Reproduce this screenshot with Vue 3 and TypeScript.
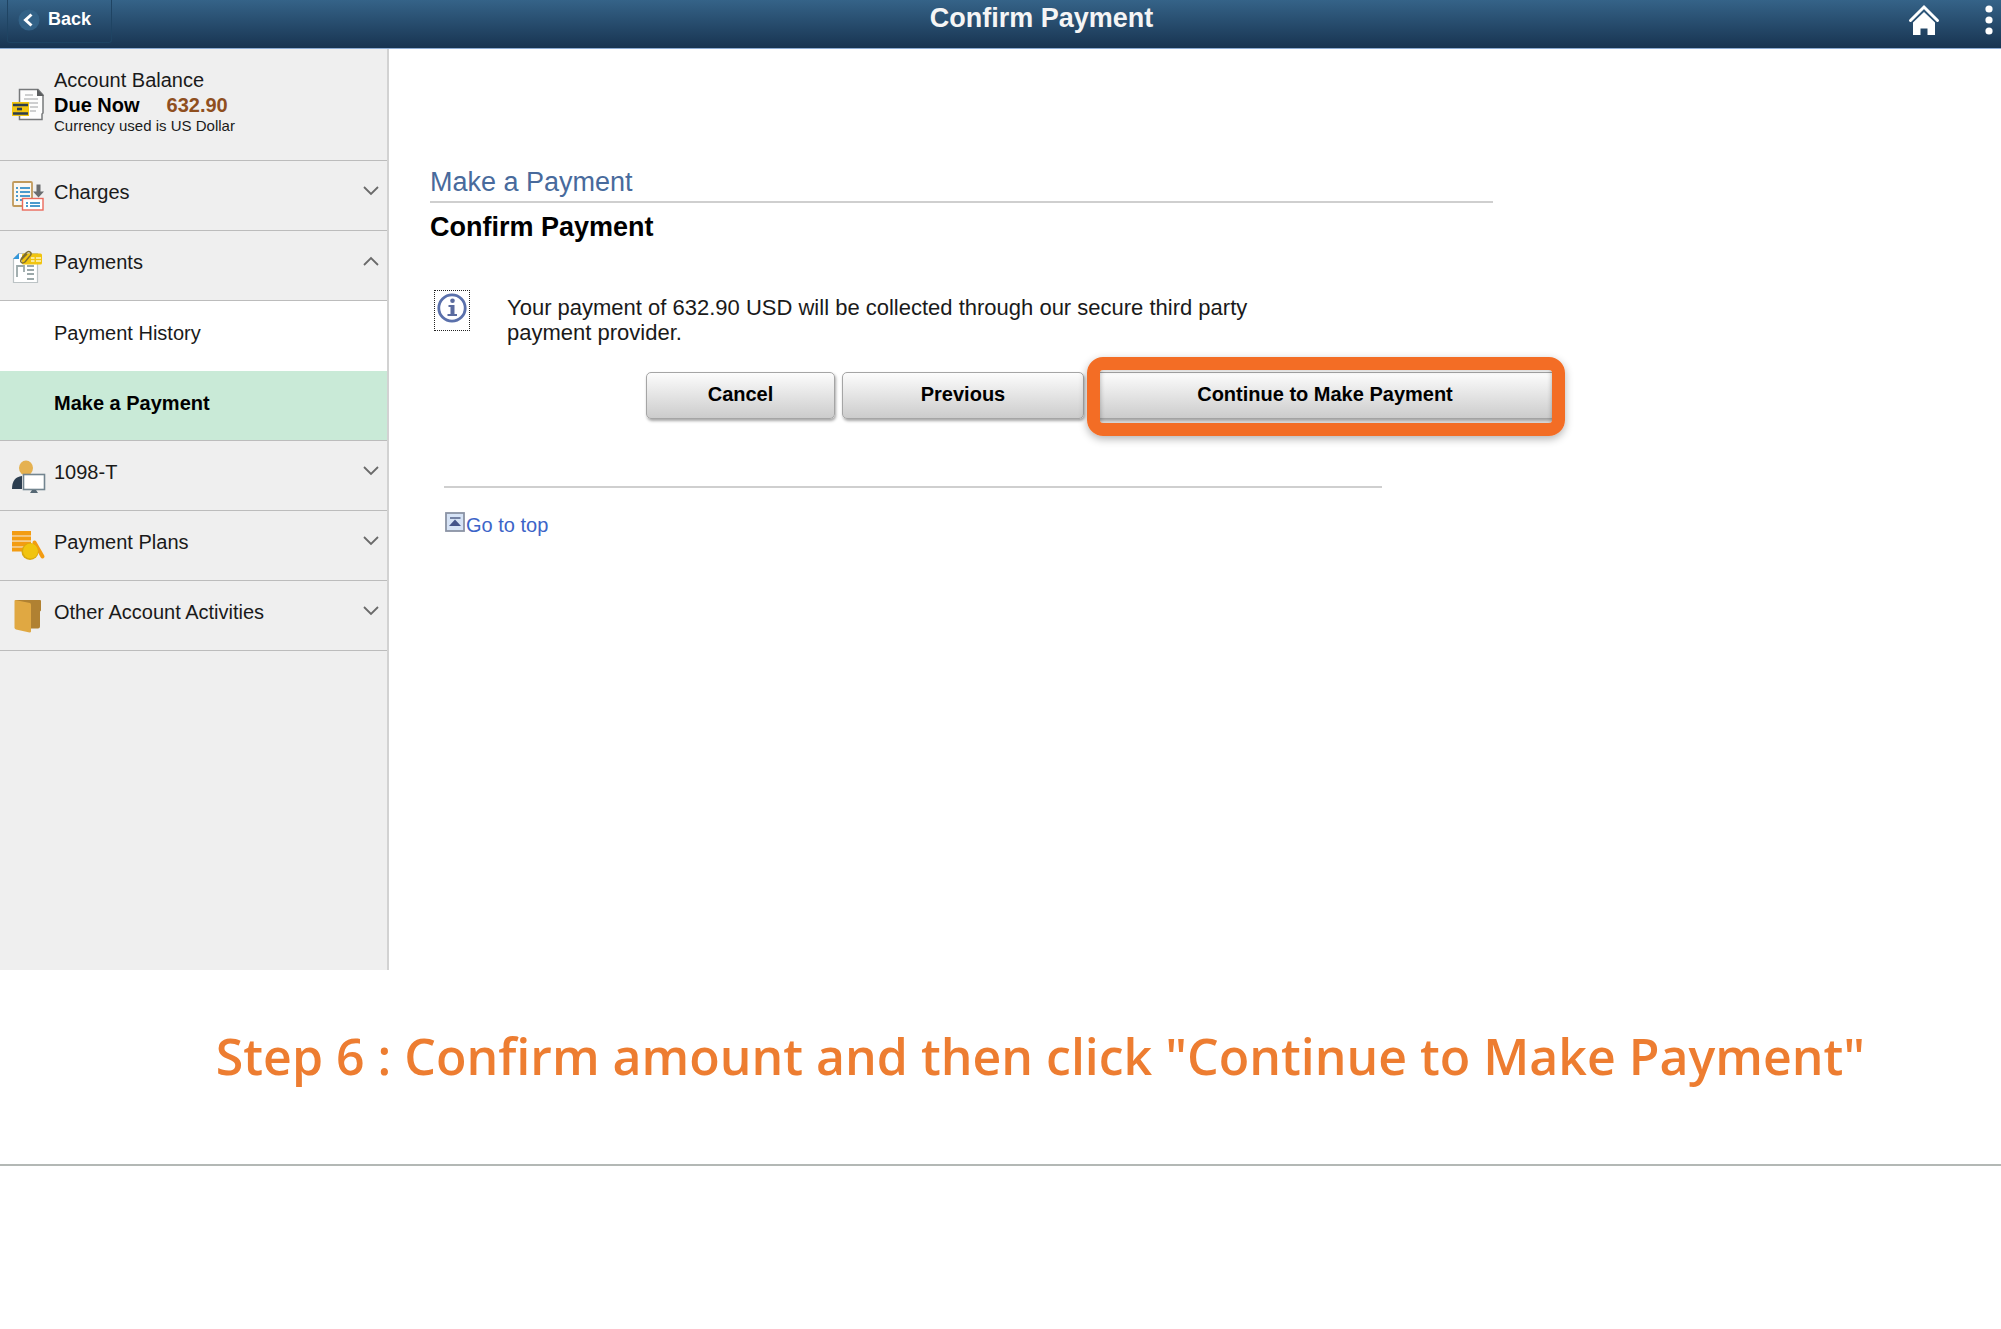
<script setup lang="ts">
import { ref } from 'vue'

interface SubItem {
  label: string
  current: boolean
}
interface Section {
  id: string
  label: string
  items: SubItem[]
}

const sections: Section[] = [
  { id: 'charges', label: 'Charges', items: [] },
  {
    id: 'payments',
    label: 'Payments',
    items: [
      { label: 'Payment History', current: false },
      { label: 'Make a Payment', current: true },
    ],
  },
  { id: 'tax', label: '1098-T', items: [] },
  { id: 'plans', label: 'Payment Plans', items: [] },
  { id: 'other', label: 'Other Account Activities', items: [] },
]
const open = ref<string>('payments')
function toggle(id: string): void {
  open.value = open.value === id ? '' : id
}
</script>

<template>
  <div id="top" class="page">
    <div class="shell">
      <header class="bar">
        <button class="back" type="button">
          <svg width="22" height="22" viewBox="0 0 22 22" aria-hidden="true">
            <circle cx="11" cy="11" r="10.5" fill="#336287" />
            <path d="M13.5 5.5 7.5 11l6 5.500" fill="none" stroke="#fff" stroke-width="3" />
          </svg>
          Back
        </button>
        <h1 class="bar-title">Confirm Payment</h1>
        <div class="bar-tools">
          <button class="tool" type="button" aria-label="Home">
            <svg width="32" height="32" viewBox="0 0 32 32" aria-hidden="true">
              <path d="M2.500 16.500 16 3l13.500 13.500" fill="none" stroke="#fff" stroke-width="3" stroke-linecap="round" stroke-linejoin="miter" />
              <path d="M16 8 27 18.500V31h-7.500v-6.500h-7V31H5V18.500Z" fill="#fff" />
            </svg>
          </button>
          <button class="tool" type="button" aria-label="Actions">
            <svg width="10" height="32" viewBox="0 0 10 32" aria-hidden="true">
              <g fill="#fff"><circle cx="5" cy="5" r="3.600" /><circle cx="5" cy="16" r="3.600" /><circle cx="5" cy="27" r="3.600" /></g>
            </svg>
          </button>
        </div>
      </header>

      <div class="body">
        <nav class="side" aria-label="Account">
          <div class="balance">
            <svg class="icon" width="34" height="34" viewBox="0 0 34 34" aria-hidden="true">
              <path d="M7.500 1.500H26l5 5.500v18l-1 1v5.500H7.500Z" fill="#fdfdfd" stroke="#77797b" stroke-width="1.500" />
              <path d="M25 1v7h7Z" fill="#5c5e60" />
              <path d="M13 7h8M12 11h14M16 15h10M18 19h8M18 23h6" stroke="#bfc0c1" stroke-width="1.600" />
              <rect y="14" width="17" height="14" fill="#f1c40f" />
              <path d="M1 17h15M1 25.500h15" stroke="#2c3e50" stroke-width="2.600" />
              <path d="M5 21h5" stroke="#2c3e50" stroke-width="2.600" />
            </svg>
            <div>
              <div class="line">Account Balance</div>
              <div class="line due"><span>Due Now</span><span class="amount">632.90</span></div>
              <div class="note">Currency used is US Dollar</div>
            </div>
          </div>

          <template v-for="s in sections" :key="s.id">
            <button class="section" type="button" :aria-expanded="open === s.id" @click="toggle(s.id)">
              <svg class="icon" width="34" height="34" viewBox="0 0 34 34" aria-hidden="true">
                <g v-if="s.id === 'charges'">
                  <rect x="1" y="2" width="19" height="24" rx="1" fill="#fbf8f2" stroke="#c19a5b" stroke-width="1.800" />
                  <path d="M4 8h2m2 0h10M4 12h2m2 0h10M4 16h2m2 0h10M4 20h2m2 0h3" stroke="#4c9bcd" stroke-width="2" />
                  <rect x="10.500" y="18.500" width="20.500" height="11.500" fill="#fff" stroke="#ec6a5c" stroke-width="1.400" />
                  <path d="M14 23h2m2 0h10M14 26h2m2 0h10" stroke="#4c9bcd" stroke-width="1.800" />
                  <path d="M24.500 4.500h4v7h3.500l-5.500 6-5.500-6h3.500Z" fill="#6b6d6f" />
                </g>
                <g v-else-if="s.id === 'payments'">
                  <path d="M1.500 9 7 3.500h18.500v29h-24Z" fill="#fff" stroke="#bcc3c5" stroke-width="1.200" />
                  <path d="M1 9 7 3v6Z" fill="#3498db" />
                  <rect x="10" y="3.500" width="20" height="11" rx="1.500" fill="#f1c40f" />
                  <path d="M19 8h3.500m1.500 0h5M19 11h3.500m1.500 0h5" stroke="#fdf3c4" stroke-width="1.500" />
                  <path d="m9 9 5-6q3-3 5 0 .5 2-2 4l-4 5q-3 2-4 0t1-3l5-5" fill="none" stroke="#7d6d33" stroke-width="1.500" />
                  <path d="M5 27V16h7v6M15 16h7M15 20h7M15 24h7M15 29h7" fill="none" stroke="#9ba8a9" stroke-width="1.800" />
                </g>
                <g v-else-if="s.id === 'tax'">
                  <path d="M0 29q0-12 10-13v13Z" fill="#2c3e50" />
                  <ellipse cx="14" cy="8" rx="7" ry="7.500" fill="#e5b150" />
                  <rect x="11.500" y="14.500" width="21" height="15" fill="#fff" stroke="#738590" stroke-width="1.600" />
                  <path d="M20 30h4l2 3h-8Z" fill="#566874" />
                </g>
                <g v-else-if="s.id === 'plans'">
                  <path d="m22.500 12.500 8 14" stroke="#f39c12" stroke-width="4" stroke-linecap="round" />
                  <path d="M0 3h19M0 8.500h19M0 14h19M0 19.500h16" stroke="#f39c12" stroke-width="4.200" />
                  <path d="M0 5.700h19M0 11.200h19M0 16.700h16" stroke="#f7bd62" stroke-width="1" />
                  <circle cx="18" cy="21.500" r="8.500" fill="#d9a80e" />
                  <circle cx="18.500" cy="21" r="7.500" fill="#f1c40f" />
                </g>
                <g v-else>
                  <path d="M3 0h25q1 0 1 1v9.500l-1 1v15q0 2-2 2h-8Z" fill="#b08132" />
                  <path d="m3 0 15 3q1 .5 1 2v26.500q0 1-1.500 1L4 29.500q-1.500-.5-1.500-2V1.500Q2.500 0 3 0Z" fill="#e0a842" />
                </g>
              </svg>
              <span class="label">{{ s.label }}</span>
              <svg class="chevron" width="16" height="10" viewBox="0 0 16 10" aria-hidden="true">
                <path :d="open === s.id ? 'M1 9 8 2l7 7' : 'M1 1l7 7 7-7'" fill="none" stroke="#6a6a6a" stroke-width="1.800" />
              </svg>
            </button>
            <ul v-if="open === s.id && s.items.length" class="sub">
              <li v-for="i in s.items" :key="i.label">
                <a href="#top" :class="{ current: i.current }" :aria-current="i.current ? 'page' : undefined">{{ i.label }}</a>
              </li>
            </ul>
          </template>
        </nav>

        <main class="main">
          <p class="crumb">Make a Payment</p>
          <h2 class="heading">Confirm Payment</h2>
          <div class="info">
            <span class="info-icon">
              <svg width="30" height="30" viewBox="0 0 30 30" aria-hidden="true">
                <circle cx="15" cy="15" r="13.200" fill="#fff" stroke="#5a70ab" stroke-width="2.800" />
                <circle cx="15.500" cy="7.800" r="2.300" fill="#5a6b9f" />
                <path d="M11.500 12h6v9h2.500v2H10.500v-2H13.500v-7h-2Z" fill="#5a6b9f" />
              </svg>
            </span>
            <p class="message">Your payment of 632.90 USD will be collected through our secure third party payment provider.</p>
          </div>
          <div class="actions">
            <button class="btn cancel" type="button">Cancel</button>
            <button class="btn previous" type="button">Previous</button>
            <div class="marked">
              <button class="btn" type="button">Continue to Make Payment</button>
            </div>
          </div>
          <hr class="rule">
          <a class="totop" href="#top">
            <svg width="20" height="20" viewBox="0 0 20 20" aria-hidden="true">
              <rect x="1" y="1" width="18" height="18" fill="#d6e3f6" stroke="#8b93a5" stroke-width="1.800" />
              <path d="M5 6h10.500" stroke="#5a688f" stroke-width="1.600" />
              <path d="m10 7.500 6 6.500H4Z" fill="#44548a" />
            </svg>
            <span>Go to top</span>
          </a>
        </main>
      </div>
    </div>

    <p class="step">Step 6 : Confirm amount and then click "Continue to Make Payment"</p>
    <hr class="divider">
  </div>
</template>

<style>
body {
  background: #fff;
}
</style>

<style scoped>
.page {
  font-family: "Liberation Sans", Arial, sans-serif;
  font-size: 20px;
  color: #1a1a1a;
}
.page * {
  box-sizing: border-box;
}
button {
  font-family: inherit;
  color: inherit;
  cursor: pointer;
}
.shell {
  display: flex;
  flex-direction: column;
  min-height: 73vh;
}
.bar {
  display: grid;
  grid-template-columns: 1fr auto 1fr;
  height: 49px;
  padding: 0 7px;
  background: linear-gradient(#356388, #183451);
  border-bottom: 1px solid #8cabd2;
  color: #fff;
}
.back {
  justify-self: start;
  display: flex;
  align-items: center;
  gap: 8px;
  height: 43px;
  padding: 0 20px 3px 10px;
  border: 1px solid #1f4463;
  border-top: 0;
  border-radius: 0 0 3px 3px;
  background: transparent;
  color: #fff;
  font-size: 18px;
  font-weight: 700;
}
.bar-title {
  margin: 0;
  padding-left: 82px;
  font-size: 27px;
  line-height: 36px;
  color: #f5f5f5;
}
.bar-tools {
  justify-self: end;
  display: flex;
  align-items: flex-start;
  gap: 44px;
  padding-top: 4px;
}
.tool {
  padding: 0;
  border: 0;
  background: none;
  line-height: 0;
}
.body {
  flex: 1;
  display: flex;
}
.side {
  flex: none;
  width: 389px;
  background: #efefef;
  border-right: 2px solid #d2d2d2;
}
.balance {
  display: flex;
  gap: 8px;
  height: 112px;
  padding: 18px 12px 0;
  border-bottom: 1px solid #bcbcbc;
}
.icon {
  flex: none;
}
.balance .icon {
  margin-top: 21px;
}
.line {
  line-height: 26px;
}
.due {
  display: flex;
  gap: 27px;
  line-height: 24px;
  font-weight: 700;
  color: #000;
}
.amount {
  color: #8f4f1f;
}
.note {
  font-size: 15px;
  line-height: 18px;
}
.section {
  display: flex;
  align-items: flex-start;
  gap: 8px;
  width: 100%;
  height: 70px;
  padding: 19px 8px 0 12px;
  border: 0;
  border-bottom: 1px solid #bcbcbc;
  background: #efefef;
  font-size: 20px;
  text-align: left;
}
.label {
  flex: 1;
  line-height: 24px;
}
.chevron {
  margin-top: 6px;
}
.sub {
  margin: 0;
  padding: 0;
  list-style: none;
  background: #fff;
}
.sub a {
  display: block;
  height: 70px;
  padding-left: 54px;
  line-height: 64px;
  color: inherit;
  text-decoration: none;
}
.sub .current {
  border-bottom: 1px solid #bcbcbc;
  background: #c9ead7;
  color: #000;
  font-weight: 700;
}
.main {
  flex: 1;
  padding: 116px 40px 0 41px;
}
.crumb {
  max-width: 1063px;
  margin: 0;
  padding-bottom: 2px;
  border-bottom: 2px solid #cfcfcf;
  font-size: 27px;
  line-height: 34px;
  color: #486a9c;
}
.heading {
  margin: 8px 0 0;
  font-size: 27px;
  line-height: 32px;
  color: #000;
}
.info {
  display: flex;
  gap: 37px;
  margin-top: 47px;
  padding-left: 4px;
}
.info-icon {
  flex: none;
  width: 36px;
  height: 41px;
  padding: 2px;
  border: 1px dotted #222;
}
.message {
  max-width: 780px;
  margin: 5px 0 0;
  font-size: 22px;
  line-height: 25px;
}
.actions {
  display: flex;
  gap: 7px;
  margin: 27px 0 0 216px;
}
.btn {
  height: 47px;
  padding: 0 0 2px;
  border: 1px solid #a5a5a5;
  border-radius: 5px;
  background: linear-gradient(#fcfcfc, #cccccc);
  box-shadow: 1px 2px 3px rgba(0, 0, 0, 0.35);
  color: #000;
  font-size: 20px;
  font-weight: 700;
}
.cancel {
  width: 189px;
}
.previous {
  width: 242px;
}
.marked {
  position: relative;
  width: 468px;
}
.marked .btn {
  width: 100%;
}
.marked::after {
  content: "";
  position: absolute;
  inset: -15px -6px -17px -4px;
  border: 13px solid #f36d25;
  border-radius: 16px;
  box-shadow: 0 3px 8px rgba(0, 0, 0, 0.3), inset 0 0 5px rgba(0, 0, 0, 0.3);
  pointer-events: none;
}
.rule {
  max-width: 938px;
  margin: 67px 0 0 14px;
  border: 0;
  border-top: 2px solid #cfcfcf;
}
.totop {
  display: inline-flex;
  gap: 1px;
  margin: 24px 0 0 15px;
  color: #3c64c8;
  text-decoration: none;
}
.totop span {
  padding-top: 1px;
  line-height: 24px;
}
.step {
  margin: 46px 0 0;
  padding-left: 80px;
  font-family: "Open Sans", "Noto Sans", sans-serif;
  font-size: 50px;
  font-weight: 600;
  line-height: 80px;
  text-align: center;
  white-space: nowrap;
  color: #ed7d31;
}
.divider {
  margin: 68px 0 0;
  border: 0;
  border-top: 2px solid #b3b8b5;
}
</style>
